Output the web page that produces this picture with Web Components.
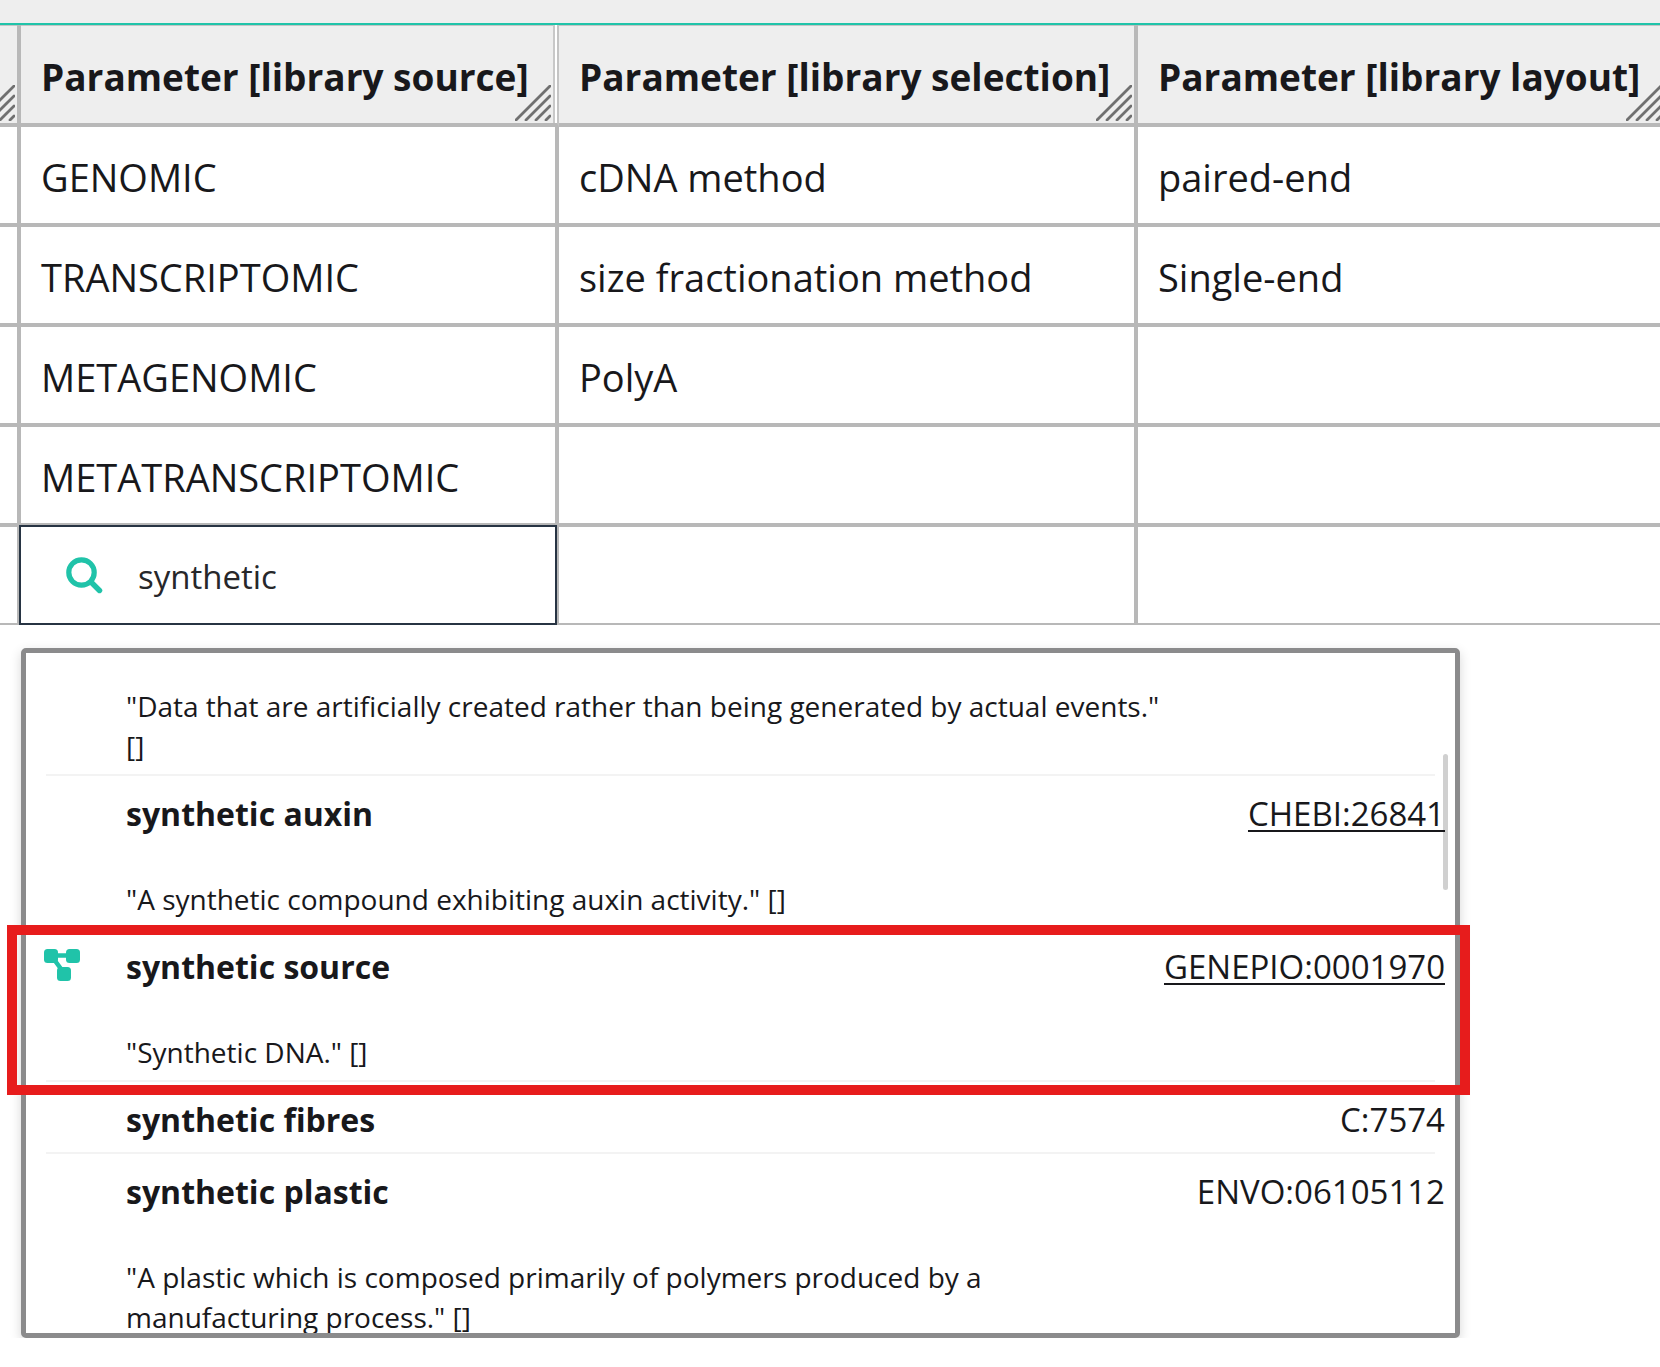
<!DOCTYPE html>
<html lang="en">
<head>
<meta charset="utf-8">
<title>Annotation table</title>
<style>
  html, body { margin: 0; background: #fff; }
  body {
    font-family: "Open Sans", "Noto Sans", sans-serif;
    color: #18181b;
    overflow: hidden;
  }
</style>
</head>
<body>
<annotation-page></annotation-page>

<script>
  const define = (name, html) => {
    const template = document.createElement('template');
    template.innerHTML = html;
    customElements.define(name, class extends HTMLElement {
      constructor() {
        super();
        this.attachShadow({ mode: 'open' }).append(template.content.cloneNode(true));
      }
    });
  };

  define('resize-grip', `
    <style>
      :host { display: block; width: 36px; height: 36px; }
      svg { display: block; width: 100%; height: 100%; }
    </style>
    <svg viewBox="0 0 36 36" fill="none" stroke="#707070" stroke-width="2.8" stroke-linecap="round" aria-hidden="true">
      <path d="M1 35 35 1M11 35 35 11M21 35 35 21M31 35 35 31"/>
    </svg>`);

  define('term-search', `
    <style>
      :host {
        display: flex; align-items: center; gap: 35px;
        box-sizing: border-box; height: 100px; padding-left: 45px;
        border: 2px solid #273443; background: #fff;
      }
      svg { flex: none; width: 37px; height: 37px; }
      input {
        flex: 1; min-width: 0; padding: 4px 0 0; border: 0; outline: 0; background: none;
        font: inherit; font-size: 33px; line-height: 48px; color: #27272a;
      }
    </style>
    <svg viewBox="0 0 37 37" fill="none" stroke="#20c3a9" aria-hidden="true">
      <circle cx="15.5" cy="15.5" r="12.7" stroke-width="5.2"/>
      <path d="M25 25l8.500 8.500" stroke-width="5.4" stroke-linecap="round"/>
    </svg>
    <input type="text" value="synthetic" aria-label="Search term">`);

  define('annotation-table', `
    <style>
      :host { display: block; overflow: hidden; border-top: 2px solid #20c3a9; }
      table {
        table-layout: fixed; width: calc(100% + 8px);
        border-collapse: separate; border-spacing: 0;
        font-size: 38px; line-height: 52px;
      }
      .index { width: 21px; } .source { width: 538px; } .selection { width: 579px; }
      th, td {
        box-sizing: border-box; height: 100px; padding: 4px 0 0 20px;
        border: 0 solid #b8b8b8; border-width: 0 4px 4px 0;
        text-align: left; white-space: nowrap;
      }
      th {
        height: 102px; padding-top: 6px; position: relative;
        background: #eee; box-shadow: inset 0 1px #c4c4c4; font-size: 37px;
      }
      /* lifted column edge: grey, white and grey hairlines side by side */
      th.split {
        border-right: 2px solid #c4c4c4;
        box-shadow: inset -2px 0 #fff, inset -4px 0 #c8c8c8, inset 0 1px #c4c4c4;
      }
      th resize-grip { position: absolute; right: 2px; bottom: 2px; }
      th.split resize-grip { right: 6px; }
      tr:last-child td { height: 98px; border-bottom-width: 2px; }
      td.active { padding: 0; }
      td.active term-search { margin: -2px; position: relative; }
    </style>
    <table>
      <colgroup><col class="index"><col class="source"><col class="selection"><col></colgroup>
      <thead><tr>
        <th><resize-grip></resize-grip></th>
        <th class="split">Parameter [library source]<resize-grip></resize-grip></th>
        <th>Parameter [library selection]<resize-grip></resize-grip></th>
        <th>Parameter [library layout]<resize-grip></resize-grip></th>
      </tr></thead>
      <tbody>
        <tr><td></td><td>GENOMIC</td><td>cDNA method</td><td>paired-end</td></tr>
        <tr><td></td><td>TRANSCRIPTOMIC</td><td>size fractionation method</td><td>Single-end</td></tr>
        <tr><td></td><td>METAGENOMIC</td><td>PolyA</td><td></td></tr>
        <tr><td></td><td>METATRANSCRIPTOMIC</td><td></td><td></td></tr>
        <tr><td></td><td class="active"><term-search></term-search></td><td></td><td></td></tr>
      </tbody>
    </table>`);

  define('term-result', `
    <style>
      :host {
        display: grid; grid-template-columns: 80px 1fr auto; position: relative;
        padding: 14px 0 8px; border-bottom: 2px solid #f3f3f3; line-height: 48px;
      }
      :host([highlighted])::after {
        content: ""; position: absolute; inset: -4px -35px -15px -39px;
        border: 10px solid #e71c1c;
      }
      svg { display: none; width: 36px; height: 32px; margin: 6px 0 0 -2px; }
      :host([tree]) svg { display: block; }
      .name { grid-column: 2; font-size: 32px; font-weight: 700; }
      .id { grid-column: 3; margin-right: -10px; font-size: 33px; }
      .description { grid-column: 2 / 4; font-size: 28px; line-height: 40px; }
      ::slotted([slot=description]) { display: block; padding-top: 41px; }
      :host([scrolled]) ::slotted([slot=description]) { padding-top: 0; }
      :host([scrolled]) { padding-top: 33px; }
      :host([scrolled]) .name, :host([scrolled]) .id { display: none; }
      ::slotted(a) { color: inherit; text-decoration: underline; text-decoration-thickness: 2px; text-underline-offset: 4px; }
    </style>
    <svg viewBox="0 0 36 32" fill="#20c3a9" aria-hidden="true">
      <path d="M11 6.500H25M9 9l11 15" stroke="#20c3a9" stroke-width="4.500"/>
      <rect width="14" height="14" rx="3.500"/>
      <rect x="22" width="14" height="14" rx="3.500"/>
      <rect x="13" y="18" width="14" height="14" rx="3.500"/>
    </svg>
    <div class="name"><slot name="name"></slot></div>
    <div class="id"><slot name="id"></slot></div>
    <div class="description"><slot name="description"></slot></div>`);

  define('term-results', `
    <style>
      :host {
        display: block; position: relative; box-sizing: border-box; height: 690px;
        margin: 23px 200px 0 21px; padding: 0 20px;
        border: 5px solid #8b8b8c; border-radius: 5px; background: #fff;
        box-shadow: 0 4px 12px rgba(0, 0, 0, .16);
      }
      .list { height: 100%; overflow-x: visible; overflow-y: clip; }
      .thumb {
        position: absolute; top: 101px; right: 7px; width: 5px; height: 136px;
        border-radius: 3px; background: #d0d0d0;
      }
    </style>
    <div class="thumb"></div>
    <div class="list"><slot></slot></div>`);

  define('annotation-page', `
    <style>
      :host { display: block; }
      .toolbar { height: 23px; background: #eee; }
    </style>
    <div class="toolbar"></div>
    <annotation-table></annotation-table>
    <term-results>
      <term-result scrolled>
        <span slot="description">"Data that are artificially created rather than being generated by actual events."<br>[]</span>
      </term-result>
      <term-result>
        <span slot="name">synthetic auxin</span><a slot="id" href="#chebi">CHEBI:26841</a>
        <span slot="description">"A synthetic compound exhibiting auxin activity." []</span>
      </term-result>
      <term-result highlighted tree>
        <span slot="name">synthetic source</span><a slot="id" href="#genepio">GENEPIO:0001970</a>
        <span slot="description">"Synthetic DNA." []</span>
      </term-result>
      <term-result>
        <span slot="name">synthetic fibres</span><span slot="id">C:7574</span>
      </term-result>
      <term-result>
        <span slot="name">synthetic plastic</span><span slot="id">ENVO:06105112</span>
        <span slot="description">"A plastic which is composed primarily of polymers produced by a<br>manufacturing process." []</span>
      </term-result>
    </term-results>`);
</script>
</body>
</html>
